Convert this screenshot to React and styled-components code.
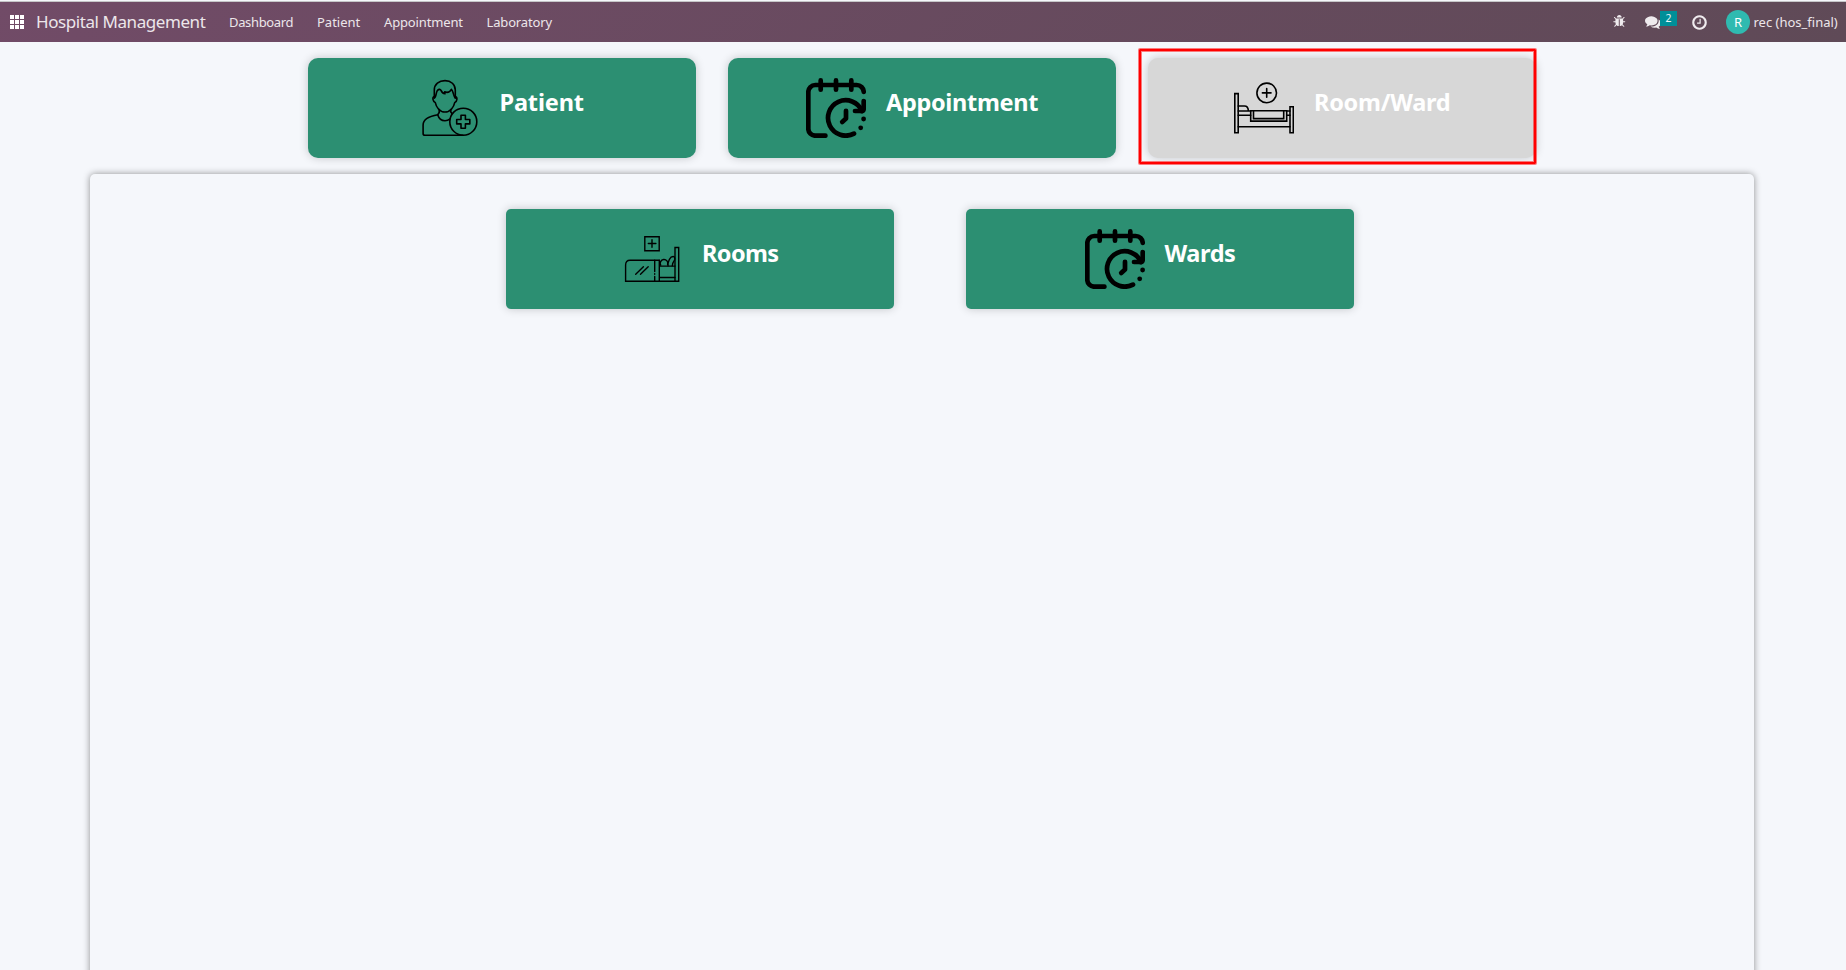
import React from "react";
import styled, { createGlobalStyle } from "styled-components";

const GlobalStyle = createGlobalStyle`
  * { box-sizing: border-box; }
  html, body { margin: 0; height: 970px; overflow: hidden; }
  body { background: #f5f7fb; font-family: "Noto Sans", "Open Sans", sans-serif; }
`;

const Page = styled.div`
  height: 970px;
  padding-top: 1px;
  display: flex;
  flex-direction: column;
  overflow: hidden;
`;

const Navbar = styled.header`
  flex: none;
  height: 41px;
  padding: 0 10px;
  border-top: 1px solid #c6c6c8;
  background: linear-gradient(135deg, #714b67, #5f4a57);
  display: flex;
  align-items: center;
  justify-content: space-between;
  color: #ece6ea;
`;

const NavGroup = styled.div`
  display: flex;
  align-items: center;
  height: 40px;
`;

const AppsGrid = styled.span`
  display: grid;
  grid-template-columns: repeat(3, 4px);
  grid-auto-rows: 4px;
  gap: 1px;
  margin-right: 12px;
  & > i { background: #fff; }
`;

const NavText = styled.span`
  flex: none;
  width: ${(p) => p.$width}px;
  margin-right: ${(p) => p.$after || 0}px;
  font-size: ${(p) => p.$size || 13}px;
  line-height: 20px;
  letter-spacing: ${(p) => p.$spacing || 0}px;
  white-space: nowrap;
`;

const NavIcon = styled.svg`
  flex: none;
  width: ${(p) => p.$size}px;
  height: ${(p) => p.$size}px;
  margin-right: ${(p) => p.$after}px;
  fill: #efebee;
`;

const Badge = styled.span`
  width: 17px;
  height: 15px;
  margin: -7px 14px 0 -1px;
  background: #008f98;
  font-size: 10.5px;
  line-height: 15px;
  text-align: center;
  color: #eef6f7;
`;

const Avatar = styled.span`
  width: 24px;
  height: 24px;
  margin-right: 3.5px;
  border-radius: 50%;
  background: #2fbab0;
  font-size: 13px;
  line-height: 24px;
  text-align: center;
  color: #fff;
`;

const CardRow = styled.div`
  display: flex;
  justify-content: center;
  gap: ${(p) => p.$gap}px;
`;

const TopCards = styled(CardRow)`
  flex: none;
  margin: 16px 2px 16px 0;
`;

const Card = styled.div`
  position: relative;
  width: 388px;
  height: 100px;
  padding: 20px 0;
  display: flex;
  justify-content: center;
  align-items: flex-start;
  gap: 20px;
  border-radius: ${(p) => p.$radius}px;
  background: ${(p) => (p.$active ? "#d7d7d7" : "#2c8f72")};
  box-shadow: 0 0 10px rgba(0, 0, 0, 0.2);
`;

const CardIcon = styled.svg`
  flex: none;
  width: 60px;
  height: 60px;
  fill: none;
  stroke: #000;
  stroke-width: ${(p) => p.$stroke};
  stroke-linecap: round;
  stroke-linejoin: round;
`;

const CardTitle = styled.h3`
  flex: none;
  width: ${(p) => p.$width}px;
  margin: 8px 0 0;
  font-size: 23.5px;
  font-weight: 700;
  line-height: 32px;
  letter-spacing: ${(p) => p.$spacing}px;
  white-space: nowrap;
  color: #fff;
`;

const Highlight = styled.span`
  position: absolute;
  left: -9px;
  top: -9px;
  width: 397px;
  height: 115px;
  border: 2px solid #ff0000;
  border-radius: 1px;
  box-shadow: 0 0 0 1px rgba(255, 0, 0, 0.5), inset 0 0 0 1px rgba(255, 0, 0, 0.5);
`;

const Panel = styled.main`
  flex: 1;
  margin: 0 92px -20px 90px;
  padding: 35px 0 0 16px;
  border-radius: 5px;
  background: #f5f7fb;
  box-shadow: 0 0 7px rgba(0, 0, 0, 0.42);
`;

const PatientIcon = () => (
  <CardIcon viewBox="0 0 60 60" $stroke={1.6}>
    <path d="M14.3 20V12C14.3 6 19 2.6 25 2.6S35.3 6.5 35.3 12V20" />
    <path d="M14.3 20C15.7 20 16 15.5 17 13.2C18 11.2 20.2 10.6 21 12.4C22 15 23 15.6 25 15.8C24.2 14.8 24.5 14 24.6 13.8C27 14.8 29.8 14.2 31.4 11.3C33.2 12.5 33.2 17.5 35.3 20" />
    <path d="M14.3 18.5C12 19 12.8 23.6 15.2 24.4C16.2 29 19.6 34 25 34S33.8 29 34.8 24.4C37.2 23.6 37.8 19 35.3 18.5" />
    <path d="M19.2 31.5V34.5C18.6 35.6 17.8 35.8 17.8 37C19 41 22 42.7 25 42.7C27 42.7 28.5 42.2 29.8 41M30.8 31.5V34L32 35.6" />
    <path d="M17.8 36.7C9 38.2 3.1 40.8 3.1 47V55.4Q3.1 57.3 5 57.3H43" />
    <circle cx="43.3" cy="43.7" r="13.5" />
    <path d="M41 37.2H45.4V41.5H49.8V45.9H45.4V50.2H41V45.9H36.7V41.5H41Z" />
  </CardIcon>
);

const CalendarClockIcon = () => (
  <CardIcon viewBox="0 0 60 60" $stroke={4.7}>
    <path d="M57.7 13.8A7 7 0 0 0 50.7 7H9.3A7 7 0 0 0 2.3 14V50.7A7 7 0 0 0 9.3 57.7H19.4" />
    <path d="M14.7 2.4V11.7M30 2.4V11.7M45.3 2.4V11.7" />
    <path d="M48 55.6A17.7 17.7 0 1 1 56 33" />
    <path d="M57.7 23V30.5Q57.7 33 55.2 33H49" />
    <path d="M40 32.8V40.5L36.2 43.9" />
    <g fill="#000" stroke="none">
      <circle cx="57.6" cy="41" r="2.4" />
      <circle cx="54.7" cy="49.8" r="2.4" />
    </g>
  </CardIcon>
);

const BedIcon = () => (
  <CardIcon viewBox="0 0 60 60" $stroke={1.6}>
    <circle cx="32.7" cy="14.9" r="9.8" />
    <path d="M32.7 10.6V19.2M28.4 14.9H37" />
    <path d="M.8 15.6H4.2V54.8H.8ZM56 28.8H59.3V54.8H56Z" strokeLinejoin="miter" />
    <path d="M4.2 28H10.5Q14 28 14.4 32.6M4.2 33H16.7M4.2 37.2H16.7M52.7 33H56M52.7 37.2H56M4.2 48.7H56" />
    <path d="M16.7 32.7H52.7V43.1H16.7ZM19.5 32.7V40.6H49.7V32.7" strokeLinejoin="miter" />
  </CardIcon>
);

const RoomIcon = () => (
  <CardIcon viewBox="0 0 60 60" $stroke={1.4}>
    <path d="M22.8 7.8H37.2V21.7H22.8ZM30 10.8V18.2M26.3 14.5H33.9" strokeLinejoin="miter" />
    <path d="M37.3 31.3H8Q3.6 31.3 3.6 36V52.3H56.7V18.5H53V52.3" strokeLinejoin="miter" />
    <path d="M32.7 31.3V42.5M32.7 44.7V45.2M32.7 47.5V52.3M37.3 31.3V52.3M37.3 37.1H53M37.3 48.5H53" />
    <path d="M13.7 45.3L21.4 37.8M18.5 45.3L26.2 37.8" />
    <path d="M38.7 36.2A3.8 3.8 0 1 1 45.6 35.5M46 36.8C45.8 32 48.2 27.4 51.2 27.5C52.4 27.6 52.8 28.4 52.8 29.5M50.3 36.8C50.5 34 51.5 32.5 52.8 30.7" />
  </CardIcon>
);

const BUG =
  "M1632 896q0 26-19 45t-45 19h-224q0 171-67 290l208 209q19 19 19 45t-19 45q-18 19-45 19t-45-19l-198-197q-5 5-15 13t-42 28.5-65 36.5-82 29-97 13v-896h-128v896q-51 0-101.5-13.5t-87-33-66-39-43.5-32.5l-15-14-183 207q-20 21-48 21-24 0-43-16-19-18-20.5-44.5t15.5-46.5l202-227q-58-114-58-274h-224q-26 0-45-19t-19-45 19-45 45-19h224v-294l-173-173q-19-19-19-45t19-45 45-19 45 19l173 173h844l173-173q19-19 45-19t45 19 19 45-19 45l-173 173v294h224q26 0 45 19t19 45zm-480-576h-640q0-133 93.5-226.5t226.5-93.5 226.5 93.5 93.5 226.5z";
const COMMENTS =
  "M1408 768q0 139-94 257t-256.5 186.5-353.5 68.5q-86 0-176-16-124 88-278 128-36 9-86 16h-3q-11 0-20.5-8t-11.5-21q-1-3-1-6.5t.5-6.5 2-6l2.5-5 3.5-5.5 4-5 4.5-5 4-4.5q5-6 23-25t26-29.5 22.5-29 25-38.5 20.5-44q-124-72-195-177t-71-224q0-139 94-257t256.5-186.5 353.5-68.5 353.5 68.5 256.5 186.5 94 257zm384 256q0 120-71 224.5t-195 176.5q10 24 20.5 44t25 38.5 22.5 29 26 29.5 23 25q1 1 4 4.5t4.5 5 4 5 3.5 5.5l2.5 5 2 6 .5 6.5-1 6.5q-3 14-13 22t-22 7q-50-7-86-16-154-40-278-128-90 16-176 16-271 0-472-132 58 4 88 4 161 0 309-45t264-129q125-92 192-212t67-254q0-77-23-152 129 71 204 178t75 230z";
const CLOCK =
  "M1024 544v448q0 14-9 23t-23 9h-320q-14 0-23-9t-9-23v-64q0-14 9-23t23-9h224v-352q0-14 9-23t23-9h64q14 0 23 9t9 23zm416 352q0-148-73-273t-198-198-273-73-273 73-198 198-73 273 73 273 198 198 273 73 273-73 198-198 73-273zm224 0q0 209-103 385.5t-279.5 279.5-385.5 103-385.5-103-279.5-279.5-103-385.5 103-385.5 279.5-279.5 385.5-103 385.5 103 279.5 279.5 103 385.5z";

const GlyphIcon = ({ d, size, after }) => (
  <NavIcon viewBox="0 0 1792 1792" $size={size} $after={after}>
    <path d={d} />
  </NavIcon>
);

export default function App() {
  return (
    <Page>
      <GlobalStyle />
      <Navbar>
        <NavGroup>
          <AppsGrid>
            {Array.from({ length: 9 }, (_, i) => (
              <i key={i} />
            ))}
          </AppsGrid>
          <NavText $width={170} $after={23} $size={17} $spacing={-0.43}>Hospital Management</NavText>
          <NavText $width={64} $after={24} $spacing={-0.35}>Dashboard</NavText>
          <NavText $width={43} $after={24}>Patient</NavText>
          <NavText $width={78} $after={24.5} $spacing={-0.15}>Appointment</NavText>
          <NavText $width={66} $spacing={-0.15}>Laboratory</NavText>
        </NavGroup>
        <NavGroup>
          <GlyphIcon d={BUG} size={13.5} after={19} />
          <GlyphIcon d={COMMENTS} size={16} after={0} />
          <Badge>2</Badge>
          <GlyphIcon d={CLOCK} size={17} after={18} />
          <Avatar>R</Avatar>
          <NavText $width={82.5}>rec (hos_final)</NavText>
        </NavGroup>
      </Navbar>
      <TopCards $gap={32}>
        <Card $radius={10}>
          <PatientIcon />
          <CardTitle $width={85} $spacing={-0.15}>Patient</CardTitle>
        </Card>
        <Card $radius={10}>
          <CalendarClockIcon />
          <CardTitle $width={152} $spacing={-0.32}>Appointment</CardTitle>
        </Card>
        <Card $radius={10} $active>
          <BedIcon />
          <CardTitle $width={136} $spacing={-0.25}>Room/Ward</CardTitle>
          <Highlight />
        </Card>
      </TopCards>
      <Panel>
        <CardRow $gap={72}>
          <Card $radius={5}>
            <RoomIcon />
            <CardTitle $width={76} $spacing={-0.6}>Rooms</CardTitle>
          </Card>
          <Card $radius={5}>
            <CalendarClockIcon />
            <CardTitle $width={71} $spacing={-0.4}>Wards</CardTitle>
          </Card>
        </CardRow>
      </Panel>
    </Page>
  );
}
